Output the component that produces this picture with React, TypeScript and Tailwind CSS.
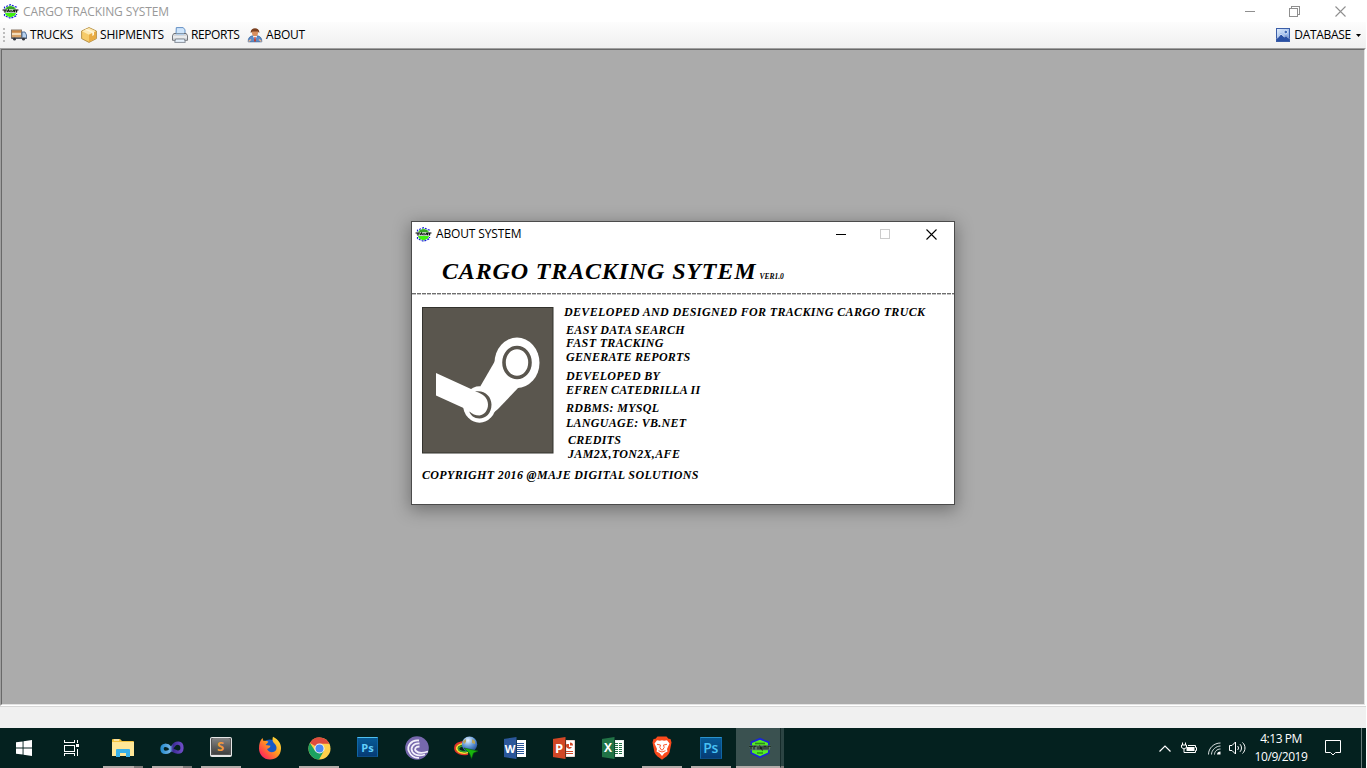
import React from "react";

function CargoLogo({ className }: { className: string }) {
  return (
    <svg viewBox="0 0 17 15" className={className}>
      <path d="M4 3.500 L8.500 1.500 L13 3.500 L14 5.500 H3 Z" fill="#49c92a" />
      <path d="M3 9 H14 L13 11.500 L8.500 13.500 L4 11.500 Z" fill="#3ff010" />
      <path d="M2.500 4.500 V3.200 L8.500 0.700 L14.500 3.200 V4.500 M2.500 10 V11.700 L8.500 14.300 L14.500 11.700 V10" fill="none" stroke="#1620d8" strokeWidth="1.200" strokeDasharray="2 1.100" />
      <path d="M5 4 H12" stroke="#287a20" strokeWidth="1" />
      <path d="M1 5.500 H16 L15 8.800 H2 Z" fill="#b9c4be" />
      <path d="M0.500 6 H5 M3 6 V8.500 M5 8 L6.500 6 L7.500 8 M9 6 V8.300 M10.500 8 L12 5.800 M12.500 8.200 V6 H16.500 M14.500 6.500 V8.500" fill="none" stroke="#141a18" strokeWidth="1.200" />
    </svg>
  );
}

function CargoLogoLarge() {
  return (
    <svg viewBox="0 0 24 22" className="h-[22px] w-6">
      <path d="M12 0.800 L21.500 4.800 V16.500 L12 21.200 L2.500 16.500 V4.800 Z" fill="#1a25d8" />
      <path d="M12 2.800 L20 6 V15.500 L12 19.200 L4 15.500 V6 Z" fill="#55ee22" />
      <path d="M7 6.500 H17" stroke="#2b8a22" strokeWidth="1.600" />
      <path d="M1 8.300 H23 L21.500 13.200 H2.500 Z" fill="#5d7a6b" />
      <path d="M1 9.300 H5 M3 9.300 V12.500 M6 12.500 V9.300 H8.500 M10 9.300 V12.500 M12 12.500 V9.300 L14 12.500 V9.300 M16 12.500 V9.300 H18 V12.500 M20 9.300 V12.500 M19.500 9.300 H23" fill="none" stroke="#17231d" strokeWidth="1.100" />
      <path d="M9 16 H15" stroke="#1b7b15" strokeWidth="1.200" />
    </svg>
  );
}

function TruckIcon() {
  return (
    <svg viewBox="0 0 16 16" className="h-4 w-4">
      <rect x="0.500" y="3" width="10" height="8" fill="#d9a468" stroke="#7b6a5a" strokeWidth="0.900" />
      <path d="M1 4.500 H10" stroke="#c98644" strokeWidth="1.500" />
      <path d="M1 7 H10" stroke="#f3dcb8" strokeWidth="2" />
      <path d="M11 5 H14 L15.500 8 V11.500 H11 Z" fill="#b9d3ef" stroke="#47658d" strokeWidth="0.900" />
      <rect x="0.500" y="10.500" width="15" height="1.500" fill="#555c68" />
      <circle cx="3.500" cy="12.200" r="1.400" fill="#30343c" />
      <circle cx="12.500" cy="12.200" r="1.400" fill="#30343c" />
    </svg>
  );
}

function BoxIcon() {
  return (
    <svg viewBox="0 0 16 16" className="h-4 w-4">
      <path d="M8 0.600 L15.400 4 V11.600 L8 15.400 L0.600 11.600 V4 Z" fill="#f6cb69" stroke="#b08a3e" strokeWidth="0.900" />
      <path d="M8 1 L15 4.200 L8 7.700 L1 4.200 Z" fill="#fde9b2" />
      <path d="M8 7.700 L15 4.200 V11.400 L8 15 Z" fill="#e9ac43" />
      <path d="M4 2.800 L11.300 6 V9 L13 8 V5 L5.800 2 Z" fill="#fff6d8" />
    </svg>
  );
}

function PrinterIcon() {
  return (
    <svg viewBox="0 0 16 16" className="h-4 w-4">
      <path d="M4 7 L4.300 0.600 H11 L13 2.500 V7 Z" fill="#cfe5fb" stroke="#5686bd" strokeWidth="0.900" />
      <path d="M1.800 6.500 H14.200 L15.500 8.500 V13.300 H0.500 V8.500 Z" fill="#d5d7da" stroke="#65696f" strokeWidth="0.900" />
      <path d="M1 10 H15" stroke="#f7f8fa" strokeWidth="1.200" />
      <path d="M4 7.200 H12" stroke="#a9cdf0" strokeWidth="1.200" />
      <path d="M3.500 12 H12.500 L13.300 15.400 H2.700 Z" fill="#e6f1fc" stroke="#6e7681" strokeWidth="0.800" />
    </svg>
  );
}

function PersonIcon() {
  return (
    <svg viewBox="0 0 16 16" className="h-4 w-4">
      <path d="M1.200 14.800 C1 11 3 9 6 8.800 H10 C13 9 15 11 14.800 14.800 Z" fill="#5c8cc9" stroke="#34619c" strokeWidth="0.800" />
      <path d="M5.800 8.800 L8 13 L10.200 8.800 Z" fill="#fff" />
      <path d="M7.400 10 H8.600 L9 14.500 H7 Z" fill="#c43b2a" />
      <ellipse cx="8" cy="5.700" rx="3" ry="3.600" fill="#d98f5e" />
      <path d="M3.800 6 C2.500 -0.500 13.500 -0.500 12.200 6 L10.800 4.600 L5.600 4.400 Z" fill="#7b4020" />
      <path d="M1.500 14.500 L4 12.500 M14.500 14.500 L12 12.500" stroke="#edb78b" strokeWidth="1.300" />
    </svg>
  );
}

function PictureIcon() {
  return (
    <svg viewBox="0 0 14 14" className="h-3.5 w-3.5">
      <defs>
        <linearGradient id="sky" x1="0" x2="1" y1="0" y2="1">
          <stop offset="0" stopColor="#e4effc" />
          <stop offset="1" stopColor="#6f9be0" />
        </linearGradient>
      </defs>
      <rect x="0.500" y="0.500" width="13" height="13" fill="url(#sky)" stroke="#3b5ea8" />
      <path d="M1 13 V10 L5 5.500 L8 8.500 L10 7 L13 9.500 V13 Z" fill="#2a51a5" />
      <path d="M1 10.500 L5 6 L8.500 9 L10 7.500 L13 10.500" fill="none" stroke="#e4efff" strokeWidth="0.900" />
      <circle cx="9.800" cy="4" r="1.800" fill="#3d6ab8" stroke="#f4f8ff" strokeWidth="0.700" />
    </svg>
  );
}

function SteamLogo() {
  return (
    <svg viewBox="0 0 132 147" className="h-[147px] w-[132px]">
      <rect x="0.500" y="0.500" width="130.500" height="145.500" fill="#5a564e" stroke="#33322d" />
      <path d="M73 54 L58.500 79 L56 100 L70 107 L76 102 L97 80 Z" fill="#fff" />
      <ellipse cx="95" cy="55.800" rx="22.500" ry="25.200" fill="#fff" />
      <ellipse cx="95" cy="55.500" rx="13" ry="15" fill="#fff" stroke="#5a564e" strokeWidth="3.600" />
      <ellipse cx="57.500" cy="97.500" rx="16.500" ry="18.200" fill="#fff" />
      <path d="M53 84.500 C62 82.500 69.500 89 69.500 97.500 C69.500 106.500 63.500 111.500 57.500 111.500 C52 111.500 48.500 108.500 47 104 C50 107 53.500 108.500 57.500 108.500 C62.500 107.500 66 103.500 66 97.500 C66 91 61 86.500 53 84.500 Z" fill="#5a564e" />
      <path d="M14 66 L49 82 L54 86 L58 106 L47 104.500 L41.500 101 L14 88.500 Z" fill="#fff" />
    </svg>
  );
}

function Minimize({ className }: { className: string }) {
  return (
    <svg viewBox="0 0 11 11" className={className} shapeRendering="crispEdges">
      <path d="M0.500 5.500 H10.500" stroke="currentColor" />
    </svg>
  );
}

function Cross({ className }: { className: string }) {
  return (
    <svg viewBox="0 0 11 11" className={className}>
      <path d="M0.500 0.500 L10.500 10.500 M10.500 0.500 L0.500 10.500" stroke="currentColor" strokeWidth="1.100" />
    </svg>
  );
}

function AboutDialog() {
  return (
    <section className="absolute left-[411px] top-[221px] flex h-[284px] w-[544px] flex-col border border-[#4b4b4b] bg-white shadow-[0_4px_16px_1px_rgba(0,0,0,0.34)]">
      <header className="flex h-6 shrink-0 items-center pl-[3px]">
        <CargoLogo className="h-[15px] w-[17px]" />
        <h2 className="ml-1 text-[12px] leading-6 tracking-[-0.150px] text-black">ABOUT SYSTEM</h2>
        <div className="ml-auto flex items-center pr-[17px]">
          <Minimize className="h-[11px] w-[11px] text-black" />
          <div className="ml-[34px] h-[10px] w-[10px] border border-[#cccccc]" />
          <Cross className="ml-9 h-[11px] w-[11px] text-black" />
        </div>
      </header>
      <div className="flex flex-1 flex-col whitespace-nowrap font-['Liberation_Serif',serif] text-[12px] font-bold italic leading-[14px] text-black">
        <div className="flex h-[47px] items-baseline pl-[30px] pt-[9px]">
          <h1 className="text-[24px] leading-[33px] tracking-[0.850px]">CARGO TRACKING SYTEM</h1>
          <span className="ml-[3px] text-[7.500px]">VER1.0</span>
        </div>
        <svg className="block h-[2px] w-full shrink-0" shapeRendering="crispEdges">
          <path d="M0 0.500 H542" stroke="#6e6e6e" strokeDasharray="4 1" />
          <path d="M0 1.500 H542" stroke="#c4c4c4" strokeDasharray="4 1" />
        </svg>
        <div className="flex pl-[10px] pt-[12px]">
          <SteamLogo />
          <div className="flex flex-col pl-[10px]">
            <p className="-mt-[2px] tracking-[0.350px]">DEVELOPED AND DESIGNED FOR TRACKING CARGO TRUCK</p>
            <div className="mt-[4px] pl-0.5">
              <p className="tracking-[0.330px]">EASY DATA SEARCH</p>
              <p className="-mt-px tracking-[0.350px]">FAST TRACKING</p>
              <p className="tracking-[0.210px]">GENERATE REPORTS</p>
            </div>
            <div className="mt-[5px] pl-0.5">
              <p className="tracking-[0.250px]">DEVELOPED BY</p>
              <p className="tracking-[0.230px]">EFREN CATEDRILLA II</p>
            </div>
            <div className="mt-[4px] pl-0.5">
              <p className="tracking-[0.310px]">RDBMS: MYSQL</p>
              <p className="mt-px tracking-[0.270px]">LANGUAGE: VB.NET</p>
            </div>
            <div className="mt-[3px] pl-1">
              <p className="tracking-[0.250px]">CREDITS</p>
              <p className="tracking-[0.340px]">JAM2X,TON2X,AFE</p>
            </div>
          </div>
        </div>
        <p className="mt-[7px] pl-[10px] tracking-[0.350px]">COPYRIGHT 2016 @MAJE DIGITAL SOLUTIONS</p>
      </div>
    </section>
  );
}

function TaskSlot({ children, bar }: { children: React.ReactNode; bar?: "single" | "stacked" }) {
  return (
    <div className="flex h-10 w-[49px] shrink-0 flex-col items-center">
      <div className="flex h-[38px] items-center justify-center pt-0.5">{children}</div>
      {bar && (
        <div className="flex h-0.5 w-10 bg-[#b3adaa]">
          {bar === "stacked" && <div className="ml-auto h-0.5 w-[9px] bg-[#7c7b79]" />}
        </div>
      )}
    </div>
  );
}

function WindowsIcon() {
  return (
    <svg viewBox="0 0 16 16" className="h-4 w-4" fill="#fff">
      <path d="M0 2.300 L6.600 1.400 V7.500 H0 Z M7.500 1.200 L16 0 V7.500 H7.500 Z M0 8.500 H6.600 V14.600 L0 13.700 Z M7.500 8.500 H16 V16 L7.500 14.800 Z" />
    </svg>
  );
}

function TaskViewIcon() {
  return (
    <svg viewBox="0 0 17 16" className="h-4 w-[17px]" fill="none" stroke="#fff" shapeRendering="crispEdges">
      <path d="M1.500 0 V2.500 H11.500 V0 M1.500 5.500 H11.500 V11.500 H1.500 Z M1.500 16 V13.500 H11.500 V16 M14.500 0 V3 M14.500 9 V16" />
      <rect x="13.500" y="4.500" width="2" height="2" fill="#fff" />
    </svg>
  );
}

function FolderIcon() {
  return (
    <svg viewBox="0 0 22 18" className="h-[18px] w-[22px]">
      <path d="M0 1 Q0 0 1 0 H8 L10 2 H21 Q22 2 22 3 V17 H0 Z" fill="#f2c23f" />
      <path d="M2 1 H7" stroke="#fff" strokeWidth="1" />
      <path d="M0 3 H22 V17 H0 Z" fill="#ffe797" />
      <path d="M4 18 V11 Q4 10 5 10 H17 Q18 10 18 11 V18 H14 V14 H8 V18 Z" fill="#39b1e8" />
    </svg>
  );
}

function InfinityIcon() {
  return (
    <svg viewBox="0 0 24 14" className="h-[14px] w-6">
      <defs>
        <linearGradient id="vs" x1="0" x2="1" y1="0" y2="0">
          <stop offset="0" stopColor="#2b8fd0" />
          <stop offset="0.400" stopColor="#72b3e4" />
          <stop offset="0.550" stopColor="#3b2a95" />
          <stop offset="1" stopColor="#6c4bc4" />
        </linearGradient>
      </defs>
      <path d="M11 8.500 C8.500 12.500 2 12.500 2 7.700 C2 3.500 7 3 10.500 7 C14 11.500 22 13.500 22 7 C22 0.800 15.500 1 13 5.500 L11 8.500" fill="none" stroke="url(#vs)" strokeWidth="3.300" />
    </svg>
  );
}

function SublimeIcon() {
  return (
    <div className="mb-0.5 flex h-[20px] w-[22px] items-start justify-center rounded-[2px] border border-b-2 border-[#e6e6e6] bg-[#555]">
      <div className="flex h-[16px] w-[18px] items-center justify-center rounded-[2px] bg-gradient-to-b from-[#858585] to-[#414141] font-['Open_Sans',sans-serif] text-[13px] font-bold leading-none text-[#f49a3a]">S</div>
    </div>
  );
}

function FirefoxIcon() {
  return (
    <svg viewBox="0 0 24 24" className="h-6 w-6">
      <defs>
        <linearGradient id="ff" x1="1" x2="0" y1="0" y2="1">
          <stop offset="0" stopColor="#fff144" />
          <stop offset="0.450" stopColor="#ff9a1f" />
          <stop offset="0.800" stopColor="#ff3750" />
          <stop offset="1" stopColor="#e4128c" />
        </linearGradient>
      </defs>
      <circle cx="12" cy="12" r="8.500" fill="#1559c7" />
      <path d="M15 0.800 C21 4 23.300 8 23 13 C22.500 19.500 18 23.500 12 23.500 C5.500 23.500 1 18.500 1 12.500 C1 8 2 4.500 4.500 2 L5.500 5 C7.500 4.600 9 5 10.500 5.800 L7.500 9 L12.500 9.700 C12 12 10.500 12 9 13 C11 16.800 15.500 17.200 18 14.200 C19.600 11 17.300 8 15.500 6.500 C14 4.500 14.500 2.500 15 0.800 Z" fill="url(#ff)" />
    </svg>
  );
}

function ChromeIcon() {
  return (
    <svg viewBox="0 0 24 24" className="ml-px h-[23px] w-[23px]">
      <circle cx="12" cy="12" r="11.500" fill="#ffd04b" />
      <path d="M12 12 L2 6.200 A11.500 11.500 0 0 1 22.400 7 H12 Z" fill="#df4c3e" />
      <path d="M2 6.200 A11.500 11.500 0 0 0 11.500 23.500 L16.500 14.500 L12 12 L7.500 14.500 Z" fill="#1ba261" />
      <circle cx="12" cy="12" r="5.300" fill="#f4f4f4" />
      <circle cx="12" cy="12" r="4.200" fill="#4a8af4" />
    </svg>
  );
}

function PhotoshopIcon({ wide }: { wide?: boolean }) {
  return wide ? (
    <div className="flex h-[22px] w-[22px] items-center justify-center border border-[#1066a5] border-b-[#0b4b83] border-t-[#2b93cc] bg-gradient-to-b from-[#075b96] to-[#063b75] font-['Open_Sans',sans-serif] text-[14px] font-semibold leading-none tracking-[-0.500px] text-[#48c1f5]">Ps</div>
  ) : (
    <div className="mb-0.5 flex h-[20px] w-[21px] items-center justify-center border border-[#1066a5] border-b-[#0b4b83] border-t-[#4fc0ef] bg-gradient-to-b from-[#075b96] to-[#063b75] font-['Open_Sans',sans-serif] text-[11px] font-bold leading-none text-[#62d0fb]">Ps</div>
  );
}

function TorrentIcon() {
  return (
    <svg viewBox="0 0 24 24" className="h-6 w-6" fill="none" stroke="#f2effa" strokeWidth="1.800">
      <circle cx="12" cy="12" r="11.800" fill="#7668ad" stroke="none" />
      <path d="M14 4.500 C6 3.500 1.500 10 4 15.500 C6 20 10 22 14 21.800" />
      <path d="M14.500 7.500 C8 7 5 12 7.500 16 C10 19.500 15 20 20 18.500" />
      <path d="M14.500 10.500 C10.500 10.500 9 13 11 15 C13.500 17.500 18 17.300 23 15.500" />
    </svg>
  );
}

function DownloadManagerIcon() {
  return (
    <svg viewBox="0 0 24 24" className="h-6 w-6">
      <defs>
        <radialGradient id="globe" cx="0.400" cy="0.250" r="0.800">
          <stop offset="0" stopColor="#e8f4ff" />
          <stop offset="0.500" stopColor="#6298d8" />
          <stop offset="1" stopColor="#1b438d" />
        </radialGradient>
      </defs>
      <path d="M12 6 C4 6 1 9 1 12 C1 17 8 19.500 14 18" fill="none" stroke="#e3332b" strokeWidth="1.800" />
      <path d="M12 7.500 C6 7.500 2.700 10 2.700 12 C2.700 16 8.500 18 14 16.500" fill="none" stroke="#ffd930" strokeWidth="1.800" />
      <path d="M12 9.500 C7 9.500 4.500 11 4.500 12.500 C4.500 15 9 16.500 14 15" fill="none" stroke="#35a52b" strokeWidth="1.600" />
      <circle cx="15.500" cy="8.300" r="7.700" fill="url(#globe)" />
      <path d="M9 5 L12 3 L12 6 L10 8 Z M18 3 L21 5 L21 8 L18 7 Z" fill="#b6a35a" />
      <path d="M10 12 L24 15 L19.500 17 L17.500 22.500 L15.500 17.500 Z" fill="#18b50d" stroke="#0a600a" strokeWidth="0.600" />
    </svg>
  );
}

function WordIcon() {
  return (
    <div className="flex h-[22px] w-[22px] items-center">
      <div className="flex h-[22px] w-[13px] items-center justify-center bg-[#2b579a] font-['Open_Sans',sans-serif] text-[11px] font-bold leading-none text-white [clip-path:polygon(0_9%,100%_0,100%_100%,0_91%)]">W</div>
      <svg viewBox="0 0 9 17" className="h-[17px] w-[9px]" shapeRendering="crispEdges">
        <path d="M0 0 H9 V17 H0 Z" fill="#fff" />
        <path d="M0 3.500 H7 M0 5.500 H7 M0 7.500 H7 M0 9.500 H7 M0 11.500 H7 M0 13.500 H7" stroke="#2b579a" />
      </svg>
    </div>
  );
}

function PowerPointIcon() {
  return (
    <div className="flex h-[22px] w-[22px] items-center">
      <div className="flex h-[22px] w-[13px] items-center justify-center bg-[#d24726] font-['Open_Sans',sans-serif] text-[13px] font-bold leading-none text-white [clip-path:polygon(0_9%,100%_0,100%_100%,0_91%)]">P</div>
      <svg viewBox="0 0 9 17" className="h-[17px] w-[9px]">
        <path d="M0 0.500 H8.500 V16.500 H0 Z" fill="#fff" stroke="#f0d5cd" />
        <path d="M0.500 4 A3 3 0 1 0 6 7 H3 V4 Z" fill="#d24726" />
        <path d="M4 2.500 A3 3 0 0 1 7 5.500 H4 Z" fill="#d24726" />
        <path d="M0 11.500 H7 M0 13.500 H7" stroke="#d24726" />
      </svg>
    </div>
  );
}

function ExcelIcon() {
  return (
    <div className="flex h-[22px] w-[22px] items-center">
      <div className="flex h-[22px] w-[13px] items-center justify-center bg-[#217346] font-['Open_Sans',sans-serif] text-[12px] font-bold leading-none text-white [clip-path:polygon(0_9%,100%_0,100%_100%,0_91%)]">X</div>
      <svg viewBox="0 0 9 17" className="h-[17px] w-[9px]" shapeRendering="crispEdges">
        <path d="M0 0.500 H8.500 V16.500 H0 Z" fill="#fff" stroke="#e8f2ec" />
        <path d="M0 3.500 H7 M0 5.500 H7 M0 7.500 H7 M0 9.500 H7 M0 11.500 H7 M0 13.500 H7" stroke="#217346" />
        <path d="M3.500 2 V15" stroke="#fff" />
      </svg>
    </div>
  );
}

function BraveIcon() {
  return (
    <svg viewBox="0 0 20 24" className="h-6 w-5">
      <path d="M5.500 0.500 H14.500 L16.500 2.700 L18.500 3 L19.500 6.500 L17.500 16.500 C16.500 19.500 13 21.500 10 23.700 C7 21.500 3.500 19.500 2.500 16.500 L0.500 6.500 L1.500 3 L3.500 2.700 Z" fill="#fb4a1c" />
      <path d="M5 4.200 L8 4.700 L10 4.200 L12 4.700 L15 4.200 L17.500 7.500 L15 13 L15.500 15.500 L12.500 17 L10 20 L7.500 17 L4.500 15.500 L5 13 L2.500 7.500 Z" fill="#fff" />
      <path d="M5 8.300 L8.500 9 L7.800 11.500 L9.500 14 H10.500 L12.200 11.500 L11.500 9 L15 8.300 M6.500 14.700 L10 16 L13.500 14.700" fill="none" stroke="#fb4a1c" strokeWidth="0.900" />
    </svg>
  );
}

function TrayIcons() {
  return (
    <div className="flex items-center text-white">
      <svg viewBox="0 0 12 7" className="h-[7px] w-3" fill="none" stroke="currentColor" strokeWidth="1.200">
        <path d="M0.500 6.500 L6 1 L11.500 6.500" />
      </svg>
      <svg viewBox="0 0 16 13" className="ml-2.5 h-[13px] w-4" fill="none" stroke="currentColor">
        <path d="M1.500 0.500 V3 M4.500 0.500 V3 M0.500 3 H5.500 V5.500 L3 7 L0.500 5.500 Z M3 7 V10.500 H14.500 V8.500 H15.500 V5.500 H14.500 V3.500 H7" />
        <rect x="5.500" y="5" width="8" height="4" fill="currentColor" stroke="none" />
      </svg>
      <svg viewBox="0 0 13 13" className="ml-[11px] h-[13px] w-[13px]" fill="none" stroke="#dce2e2">
        <path d="M0.500 12.500 C0.500 6 6 1 12.500 1 M3.500 12.500 C3.500 8 8 4 12.500 4 M6.500 12.500 C6.500 9.500 9 7 12.500 7" />
        <path d="M9 12.500 C9 10.500 10.500 9.500 12.500 9.500 V12.500 Z" fill="#fff" stroke="none" />
      </svg>
      <svg viewBox="0 0 17 14" className="ml-2 h-[14px] w-[17px]" fill="none" stroke="currentColor">
        <path d="M0.500 4.500 H3 L6.500 1 V13 L3 9.500 H0.500 Z M8.500 5 C9.800 6 9.800 8 8.500 9 M11 3.200 C13 5 13 9 11 10.800 M13.500 1.500 C16.800 4.500 16.800 9.500 13.500 12.500" />
      </svg>
    </div>
  );
}

function Taskbar() {
  return (
    <footer className="flex h-10 w-[1366px] shrink-0 bg-[#04211f]">
      <div className="flex w-12 items-center justify-center">
        <WindowsIcon />
      </div>
      <div className="flex w-[50px] items-center pl-[15px]">
        <TaskViewIcon />
      </div>
      <TaskSlot bar="stacked"><FolderIcon /></TaskSlot>
      <TaskSlot bar="stacked"><InfinityIcon /></TaskSlot>
      <TaskSlot bar="single"><SublimeIcon /></TaskSlot>
      <TaskSlot><FirefoxIcon /></TaskSlot>
      <TaskSlot bar="single"><ChromeIcon /></TaskSlot>
      <TaskSlot><PhotoshopIcon /></TaskSlot>
      <TaskSlot><TorrentIcon /></TaskSlot>
      <TaskSlot><DownloadManagerIcon /></TaskSlot>
      <TaskSlot><WordIcon /></TaskSlot>
      <TaskSlot><PowerPointIcon /></TaskSlot>
      <TaskSlot><ExcelIcon /></TaskSlot>
      <TaskSlot bar="single"><BraveIcon /></TaskSlot>
      <TaskSlot bar="single"><PhotoshopIcon wide /></TaskSlot>
      <div className="ml-px flex h-10">
        <div className="flex w-[44px] flex-col border-b-2 border-[#b3adaa] bg-[#3a5150] pl-[12px] pt-[9px]">
          <CargoLogoLarge />
        </div>
        <div className="w-1 border-b-2 border-l border-b-[#7c7b79] border-l-[#152b2a] bg-[#2c4443]" />
      </div>
      <div className="ml-auto flex items-center">
        <TrayIcons />
        <div className="ml-2 flex w-[54px] flex-col items-center whitespace-nowrap text-[12px] leading-[18px] tracking-[-0.450px] text-white">
          <span>4:13 PM</span>
          <span>10/9/2019</span>
        </div>
        <svg viewBox="0 0 16 16" className="ml-[17px] h-4 w-4" fill="none" stroke="#fff">
          <path d="M0.500 0.500 H15.500 V12.500 H10.500 L8 15 L5.500 12.500 H0.500 Z" />
        </svg>
        <div className="ml-5 h-10 w-[5px] border-l border-[#677b7a]" />
      </div>
    </footer>
  );
}

export default function App() {
  return (
    <main className="relative flex h-[768px] w-[1367px] flex-col overflow-hidden bg-white font-['Open_Sans',sans-serif] text-[12px] text-black">
      <header className="flex h-[22px] shrink-0 items-center pl-[2px]">
        <CargoLogo className="h-[15px] w-[17px]" />
        <h1 className="ml-[4px] pt-[2px] tracking-[-0.120px] text-[#999999]">CARGO TRACKING SYSTEM</h1>
        <div className="ml-auto flex items-center pr-[21px] text-[#8f8f8f]">
          <Minimize className="h-[11px] w-[11px]" />
          <svg viewBox="0 0 11 11" className="ml-[34px] h-[11px] w-[11px]" fill="none" stroke="currentColor" shapeRendering="crispEdges">
            <path d="M0.500 2.500 H8.500 V10.500 H0.500 Z M2.500 2.500 V0.500 H10.500 V8.500 H8.500" />
          </svg>
          <Cross className="ml-[35px] h-[11px] w-[11px]" />
        </div>
      </header>
      <nav className="flex h-[26px] w-[1366px] shrink-0 items-center bg-gradient-to-b from-[#fdfdfd] to-[#f0f0f0] pl-[3px]">
        <svg viewBox="0 0 2 15" className="h-[15px] w-0.5" shapeRendering="crispEdges">
          <path d="M1 0 V15" stroke="#bcbcbc" strokeWidth="2" strokeDasharray="2 2" />
        </svg>
        <div className="ml-[6px] flex w-[70px] items-center gap-[3px] tracking-[-0.200px]">
          <TruckIcon /><span>TRUCKS</span>
        </div>
        <div className="flex w-[91px] items-center gap-[3px] tracking-[-0.200px]">
          <BoxIcon /><span>SHIPMENTS</span>
        </div>
        <div className="flex w-[75px] items-center gap-[3px] tracking-[-0.400px]">
          <PrinterIcon /><span>REPORTS</span>
        </div>
        <div className="flex items-center gap-[3px] tracking-[-0.200px]">
          <PersonIcon /><span>ABOUT</span>
        </div>
        <div className="ml-auto flex items-center pr-[5px]">
          <PictureIcon />
          <span className="ml-1 tracking-[-0.300px]">DATABASE</span>
          <svg viewBox="0 0 5 3" className="ml-[5px] h-[3px] w-[5px]"><path d="M0 0 H5 L2.500 3 Z" /></svg>
        </div>
      </nav>
      <div className="h-[658px] w-[1366px] shrink-0 border border-b-white border-l-[#a0a0a0] border-r-white border-t-[#a0a0a0]">
        <div className="h-full border border-b-[#e3e3e3] border-l-[#696969] border-r-[#e3e3e3] border-t-[#696969] bg-[#ababab]" />
      </div>
      <div className="h-[22px] w-[1366px] shrink-0 border-t border-[#d7d7d7] bg-[#f0f0f0]" />
      <Taskbar />
      <AboutDialog />
    </main>
  );
}
